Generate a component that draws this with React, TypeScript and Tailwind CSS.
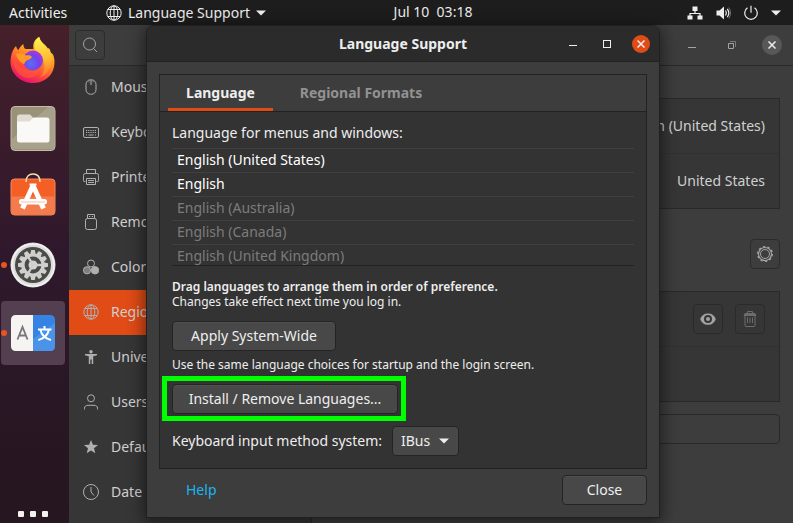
import React from "react";

type IconProps = { children: React.ReactNode; className?: string };

function Icon({ children, className = "h-4 w-4" }: IconProps) {
  return (
    <svg viewBox="0 0 16 16" fill="none" stroke="currentColor" strokeWidth="1" className={className} aria-hidden="true">
      {children}
    </svg>
  );
}

const globe = (
  <>
    <circle cx="8" cy="8" r="7.200" />
    <ellipse cx="8" cy="8" rx="3.800" ry="7.200" />
    <path d="M1.700 4.500h12.600M1.700 11.500h12.600M8 1v14" />
  </>
);

const panels = [
  {
    name: "Mouse & Touchpad",
    icon: (
      <>
        <rect x="3" y="0.8" width="10" height="14.4" rx="4.5" />
        <path d="M8 1v5" />
        <path d="M6 1.5v2M10 1.5v2" opacity=".5" />
      </>
    ),
  },
  {
    name: "Keyboard Shortcuts",
    icon: (
      <>
        <rect x="0.5" y="3.500" width="15" height="10" rx="1.5" />
        <path d="M3 6.500h10M3 8.500h10" strokeDasharray="1.2 1" />
        <path d="M3 11h1M5.5 11h5M12 11h1" />
      </>
    ),
  },
  {
    name: "Printers",
    icon: (
      <>
        <path d="M3.500 4.500v-4h9v4M2.500 12.500H1.200a.8.8 0 0 1-.8-.8V6.500a2 2 0 0 1 2-2h11.200a2 2 0 0 1 2 2v5.200a.8.8 0 0 1-.8.8h-1.300" />
        <path d="M3.500 15.500v-6h9v6zM5 11.500h6M5 13.500h6" />
      </>
    ),
  },
  {
    name: "Removable Media",
    icon: (
      <>
        <path d="M4.500 4.500v-4h7v4M6 2.500h1.200M8.800 2.500H10" />
        <rect x="2.500" y="4.500" width="11" height="11" rx="2" />
      </>
    ),
  },
  {
    name: "Color",
    icon: (
      <>
        <circle cx="8" cy="4.500" r="3.500" />
        <circle cx="4" cy="11.300" r="3.600" fill="currentColor" fillOpacity=".6" />
        <circle cx="12" cy="11.300" r="3.700" fill="currentColor" />
      </>
    ),
  },
  { name: "Region & Language", icon: globe },
  {
    name: "Universal Access",
    icon: (
      <g fill="currentColor" stroke="none">
        <circle cx="8" cy="2.800" r="1.800" />
        <path d="M2 5h12v1.300l-3.800.9V15H8.700v-4.500H7.300V15H5.800V7.200L2 6.300z" />
      </g>
    ),
  },
  {
    name: "Users",
    icon: (
      <>
        <circle cx="8" cy="4.300" r="3.500" />
        <path d="M1.500 15.500v-1.200c0-2 1.500-3 3.500-3h6c2 0 3.500 1 3.500 3v1.200" />
      </>
    ),
  },
  {
    name: "Default Applications",
    icon: <path fill="currentColor" stroke="none" d="m8 1 1.900 4.800 5.100.3-4 3.200 1.300 5L8 11.500l-4.300 2.800 1.300-5-4-3.200 5.100-.3z" />,
  },
  {
    name: "Date & Time",
    icon: (
      <>
        <circle cx="8" cy="8" r="7.500" />
        <path d="M8 3v5l3 3.500" />
      </>
    ),
  },
];

const languages = [
  { name: "English (United States)", active: true },
  { name: "English", active: true },
  { name: "English (Australia)", active: false },
  { name: "English (Canada)", active: false },
  { name: "English (United Kingdom)", active: false },
];

function FirefoxIcon() {
  return (
    <svg viewBox="0 0 48 48" className="h-12 w-12" aria-hidden="true">
      <defs>
        <linearGradient id="fxBody" x1=".8" y1="0" x2=".3" y2="1">
          <stop offset="0" stopColor="#fff44f" />
          <stop offset=".4" stopColor="#ff9a22" />
          <stop offset=".7" stopColor="#ff4a3c" />
          <stop offset="1" stopColor="#e50a75" />
        </linearGradient>
        <linearGradient id="fxFlame" x1=".5" y1="0" x2=".6" y2="1">
          <stop offset="0" stopColor="#fff44f" />
          <stop offset=".6" stopColor="#ffb52e" />
          <stop offset="1" stopColor="#ff6a34" />
        </linearGradient>
        <radialGradient id="fxGlobe" cx=".4" cy=".65" r=".7">
          <stop offset="0" stopColor="#5b6df8" />
          <stop offset=".6" stopColor="#7542e5" />
          <stop offset="1" stopColor="#b833e1" />
        </radialGradient>
      </defs>
      <path fill="url(#fxBody)" d="M7 9c.5 2 1.300 3 2.500 4 1-2.500 2.500-4.500 5-6-.2 2.500.6 4 2 5h8c-1-6 1.500-10 5.500-12 .6 4 3.500 6 6 8.500 1.500 1.500 2 3 2.500 4.500l1-2c1 0 2 3 2.500 5 2.500 0 4.500 7 3 14C43 40 34 46 24 46 11 46 1.500 36 1.500 25 1.500 18 4 12 7 9Z" />
      <path fill="url(#fxFlame)" d="M26 12c-1-6 1.500-10 4.500-12 .6 4 3.500 6 6 8.500 5 5.500 7.500 12 5.500 20-1.500 6-6 10-11 12 4-5 6-12 3-18-2-4-6-6-8-10.500Z" />
      <circle cx="24" cy="23.500" r="10" fill="url(#fxGlobe)" />
      <path fill="#ff9a22" d="M7 17c3-1.500 7-1 10 1.500 3-.5 5 0 6 1.500-1.500 2.500-4 2.500-6 4-1 1-1 2-2 3-3-1-7-5-8-10Z" />
      <path fill="#ff5738" d="M4 21c2 5 7 10 12 11 5 3 12 2 16-3-1 8-6 12-13 12C10 41 4 31 4 21Z" opacity=".65" />
    </svg>
  );
}

function FilesIcon() {
  return (
    <svg viewBox="0 0 48 48" className="h-12 w-12" aria-hidden="true">
      <rect x="2" y="1.500" width="44" height="44" rx="4" fill="#999279" stroke="#c1bda9" />
      <path d="M3 34 39 2h4a2 2 0 0 1 2 2v38a2 2 0 0 1-2 2H5a2 2 0 0 1-2-2z" fill="#b2ad9c" opacity=".55" />
      <path d="M8 12a2.500 2.500 0 0 1 2.500-2.500H21l3 3v7H8z" fill="#e1dccf" />
      <path d="M8 16.500h12.500l4-4H38a2.500 2.500 0 0 1 2.500 2.500v20a2.500 2.500 0 0 1-2.500 2.500H10.500A2.500 2.500 0 0 1 8 35z" fill="#faf9f7" />
    </svg>
  );
}

function SoftwareIcon() {
  return (
    <svg viewBox="0 0 48 48" className="h-12 w-12" aria-hidden="true">
      <rect x="2" y="6" width="44" height="36" rx="3.500" fill="#f45f26" stroke="#f38b62" />
      <path d="M2.500 23.500h43V39a2.500 2.500 0 0 1-2.500 2.500H5A2.500 2.500 0 0 1 2.500 39z" fill="#f47c4c" />
      <path d="M17 9C17 3.500 20 1 24 1S31 3.500 31 9" fill="none" stroke="#f8dfae" strokeWidth="1.600" />
      <path d="M24 12.500 13.500 35.500M24 12.500l10.500 23" stroke="#fff" strokeWidth="5" fill="none" />
      <path d="M20.500 11.500h7" stroke="#fff" strokeWidth="2" />
      <rect x="10" y="26" width="28" height="5.500" rx="2.700" fill="#fff" />
      <path d="M12 29h24" stroke="#f5c3ae" />
    </svg>
  );
}

const teeth = [0, 30, 60, 90, 120, 150, 180, 210, 240, 270, 300, 330];

function SettingsIcon() {
  return (
    <svg viewBox="0 0 48 48" className="h-12 w-12" aria-hidden="true">
      <circle cx="24" cy="24" r="22.500" fill="#dcdcda" />
      <circle cx="24" cy="24" r="21" fill="none" stroke="#f2f2f0" strokeWidth="1.500" />
      <circle cx="24" cy="24" r="18" fill="#4a4a48" />
      <g fill="#cfcfcc">
        {teeth.map((a) => (
          <path key={a} transform={`rotate(${a} 24 24)`} d="M22.200 9h3.600l1 4.500h-5.600z" />
        ))}
      </g>
      <circle cx="24" cy="24" r="10" fill="none" stroke="#cfcfcc" strokeWidth="3.200" />
      <circle cx="24" cy="24" r="4.500" fill="#d4d4d2" />
      <path d="M24 24h9M24 24l-5-8.500M24 24l-5 8.500" stroke="#cfcfcc" strokeWidth="2.400" />
    </svg>
  );
}

function LanguageIcon() {
  return (
    <svg viewBox="0 0 48 48" className="h-12 w-12" aria-hidden="true">
      <path d="M24 6H6.500A4.500 4.500 0 0 0 2 10.500v27A4.500 4.500 0 0 0 6.500 42H24z" fill="#f5f4f2" />
      <path d="M24 6h17.500a4.500 4.500 0 0 1 4.500 4.500v27a4.500 4.500 0 0 1-4.500 4.500H24z" fill="#3584e4" />
      <path d="M24 30 46 14v23.500a4.500 4.500 0 0 1-4.500 4.500H24z" fill="#4b93e8" />
      <path d="M8.500 30.500 13.500 18l5 12.500M10 26.500h7" fill="none" stroke="#77767b" strokeWidth="1.800" />
      <path d="M29 20.500h13.500M35.500 17v3.500M31.500 21c1 5 5 8.500 10.500 10M39.800 21c-1 5-5 8.500-10.500 10" fill="none" stroke="#fff" strokeWidth="2" />
    </svg>
  );
}

function Caret({ className = "" }: { className?: string }) {
  return (
    <svg viewBox="0 0 10 6" className={`h-[6px] w-[10px] ${className}`} aria-hidden="true">
      <path d="M0 .5h10L5 5.500z" fill="currentColor" />
    </svg>
  );
}

const dockItems = [
  { name: "Firefox", icon: <FirefoxIcon />, running: false, focused: false },
  { name: "Files", icon: <FilesIcon />, running: false, focused: false },
  { name: "Ubuntu Software", icon: <SoftwareIcon />, running: false, focused: false },
  { name: "Settings", icon: <SettingsIcon />, running: true, focused: false },
  { name: "Language Support", icon: <LanguageIcon />, running: true, focused: true },
];

function TopBar() {
  return (
    <header className="grid h-[25px] shrink-0 grid-cols-[1fr_auto_1fr] items-center bg-[#1d1d1d] text-[#eeeeee]">
      <div className="flex items-center">
        <button className="w-[106px] pl-[9px] text-left">Activities</button>
        <button className="flex items-center gap-[6px]">
          <Icon className="h-4 w-4">{globe}</Icon>
          <span>Language Support</span>
          <Caret />
        </button>
      </div>
      <button className="-mt-px whitespace-pre pl-[73px]">Jul 10  03:18</button>
      <button className="mr-3 flex items-center gap-3 justify-self-end" aria-label="System menu">
        <svg viewBox="0 0 16 16" className="h-4 w-4" aria-hidden="true">
          <path d="M5.500 1.500h5v4.500h-5zM.5 10.500h5v4h-5zM10.500 10.500h5v4h-5z" fill="currentColor" />
          <path d="M8 6v2.500M3 11V8.500h10V11" fill="none" stroke="currentColor" strokeWidth="1.200" />
        </svg>
        <svg viewBox="0 0 16 16" className="h-4 w-4" aria-hidden="true">
          <path d="M1.500 5.500h3L9 1.500v13l-4.500-4h-3z" fill="currentColor" />
          <path d="M10.500 5.500q1.600 2.500 0 5M12.300 3.800q3 4.200 0 8.400" fill="none" stroke="currentColor" strokeWidth="1.200" />
          <path d="M13.800 2.500q3.500 5.500 0 11" fill="none" stroke="currentColor" opacity=".4" />
        </svg>
        <svg viewBox="0 0 16 16" className="h-4 w-4" aria-hidden="true">
          <path d="M4.500 2.800a6.300 6.300 0 1 0 7 0M8 .8v7" fill="none" stroke="currentColor" strokeWidth="1.200" />
        </svg>
        <Caret />
      </button>
    </header>
  );
}

function Dock() {
  return (
    <nav aria-label="Dock" className="flex w-[69px] shrink-0 flex-col justify-between bg-linear-to-b from-[#46202a] via-[#2f182c] via-45% to-[#25161f] pt-1 pb-[6px]">
      <div className="flex flex-col gap-1">
        {dockItems.map((d) => (
          <button
            key={d.name}
            aria-label={d.name}
            className={`relative ml-px flex h-16 w-16 items-center justify-center rounded-[4px] ${d.focused ? "bg-[#543f50]" : ""}`}
          >
            {d.running && <span className="absolute left-0 h-[6px] w-[6px] rounded-full bg-[#e95420]" />}
            {d.icon}
          </button>
        ))}
      </div>
      <button aria-label="Show Applications" className="flex gap-[6px] pl-[18px]">
        <span className="h-[6px] w-[6px] rounded-[1px] bg-[#f2f1ee]" />
        <span className="h-[6px] w-[6px] rounded-[1px] bg-[#f2f1ee]" />
        <span className="h-[6px] w-[6px] rounded-[1px] bg-[#f2f1ee]" />
      </button>
    </nav>
  );
}

const flatButton = "flex h-[30px] w-[30px] items-center justify-center rounded-[4px] border border-[#2b2b2b]";

function SettingsWindow() {
  return (
    <section aria-label="Settings" className="flex min-w-0 flex-1 flex-col bg-[#3d3d3d] text-[#d0d0d0]">
      <header className="flex h-[41px] shrink-0 items-center justify-between border-b border-[#292929] px-[6px] pr-[11px]">
        <button aria-label="Search" className={`${flatButton} text-[#a3a3a3]`}>
          <Icon className="h-4 w-4">
            <circle cx="7.500" cy="7" r="6" />
            <path d="m11.500 11.500 3.500 3.500" />
          </Icon>
        </button>
        <div className="flex items-center text-[#a3a3a3]">
          <button aria-label="Minimize" className="flex h-5 w-10 items-center justify-center">
            <span className="mt-1 h-px w-2 bg-current" />
          </button>
          <button aria-label="Restore" className="flex h-5 w-10 items-center justify-center">
            <svg viewBox="0 0 8 8" className="h-2 w-2" fill="none" stroke="currentColor" aria-hidden="true">
              <path d="M.5 2.500h5v5h-5z" />
              <path d="M2 .5h5.500V6" opacity=".6" />
            </svg>
          </button>
          <button aria-label="Close settings" className="ml-[10px] flex h-5 w-5 items-center justify-center rounded-full bg-[#585858] text-[#eeeeee]">
            <svg viewBox="0 0 8 8" className="h-2 w-2" stroke="currentColor" strokeWidth="1.500" aria-hidden="true">
              <path d="m.5.500 7 7M7.500.500l-7 7" />
            </svg>
          </button>
        </div>
      </header>
      <div className="flex min-h-0 flex-1">
        <nav aria-label="Settings panels" className="w-[243px] shrink-0 overflow-hidden border-r border-[#292929] bg-[#363636]">
          <ul className="-mt-px">
            {panels.map((p) => (
              <li key={p.name}>
                <a
                  href="#"
                  className={`flex h-[45px] items-center gap-3 pb-px pl-[14px] ${p.name === "Region & Language" ? "bg-[#e04b16]" : ""}`}
                >
                  <span className="text-[#b0b0b0]">
                    <Icon>{p.icon}</Icon>
                  </span>
                  <span>{p.name}</span>
                </a>
              </li>
            ))}
          </ul>
        </nav>
        <main className="flex min-w-0 flex-1 flex-col px-[13px] pt-8 pl-8">
          <div className="border border-[#292929] bg-[#363636]">
            <div className="flex h-[55px] items-center justify-end border-b border-[#313131] px-[14px]">English (United States)</div>
            <div className="flex h-[54px] items-center justify-end px-[14px]">United States</div>
          </div>
          <button aria-label="Input source options" className={`${flatButton} mt-[30px] self-end text-[#a3a3a3]`}>
            <Icon>
              <circle cx="8" cy="8" r="4.500" />
              <circle cx="8" cy="8" r="6.500" strokeWidth="1.200" />
              <circle cx="8" cy="8" r="7.300" strokeWidth="1.400" strokeDasharray="2.300 2.286" />
            </Icon>
          </button>
          <div className="mt-[22px] border border-[#292929] bg-[#363636]">
            <div className="flex h-[55px] items-center justify-end gap-3 border-b border-[#313131] px-[14px]">
              <button aria-label="Show keyboard layout" className={`${flatButton} text-[#a3a3a3]`}>
                <svg viewBox="0 0 16 16" className="h-4 w-4" aria-hidden="true">
                  <path fill="currentColor" fillRule="evenodd" d="M8 2.500c4 0 6.500 2 7.800 5.500C14.500 11.500 12 13.800 8 13.800S1.500 11.500.2 8C1.500 4.500 4 2.500 8 2.500ZM8 4a4 4 0 1 0 0 8 4 4 0 0 0 0-8Zm0 2a2 2 0 1 1 0 4 2 2 0 0 1 0-4Z" />
                </svg>
              </button>
              <button aria-label="Remove input source" className={`${flatButton} text-[#6c6c6c]`}>
                <Icon>
                  <path d="M5.500 2.500v-2h5v2" />
                  <path d="M2 4.500h12L13 2.500H3z" fill="currentColor" />
                  <path d="M3 5v9.500a1 1 0 0 0 1 1h8a1 1 0 0 0 1-1V5M5.500 6.500V12M8 6.500V12M10.500 6.500V12" />
                </Icon>
              </button>
            </div>
            <div className="h-[54px]" />
          </div>
          <button aria-label="Manage Installed Languages" className="mt-3 h-[30px] rounded-[4px] border border-[#292929]" />
        </main>
      </div>
    </section>
  );
}

const pushButton =
  "h-[30px] whitespace-nowrap rounded-[4px] border border-[#242424] bg-[#484848] text-[#eeeeee] shadow-[inset_0_1px_0_#505050]";

function LanguageDialog() {
  return (
    <section
      role="dialog"
      aria-label="Language Support"
      className="absolute top-[25px] left-[146px] w-[514px] rounded-t-[8px] border border-[#202020] bg-[#3d3d3d] text-[#eeeeee] shadow-[0_3px_16px_2px_rgba(0,0,0,0.5)]"
    >
      <header className="grid h-[36px] grid-cols-[1fr_auto_1fr] items-center rounded-t-[7px] border-b border-[#222222] bg-[#2b2b2b]">
        <span />
        <h1 className="font-bold">Language Support</h1>
        <div className="flex items-center justify-end pr-[9px]">
          <button aria-label="Minimize dialog" className="flex h-5 w-[34px] items-center justify-center">
            <span className="mt-1 h-px w-2 bg-current" />
          </button>
          <button aria-label="Maximize dialog" className="flex h-5 w-[34px] items-center justify-center">
            <span className="h-2 w-2 border border-current" />
          </button>
          <button aria-label="Close dialog" className="ml-2 flex h-[18px] w-[18px] items-center justify-center rounded-full bg-[#e04b16]">
            <svg viewBox="0 0 8 8" className="h-2 w-2" stroke="currentColor" strokeWidth="1.500" aria-hidden="true">
              <path d="m.5.500 7 7M7.500.500l-7 7" />
            </svg>
          </button>
        </div>
      </header>
      <div className="px-3 py-3">
        <div className="border border-[#222222] bg-[#333333]">
          <div role="tablist" className="flex h-[37px] border-b border-[#222222] bg-[#3d3d3d] pl-2 font-bold">
            <button role="tab" aria-selected="true" className="w-[105px] border-b-[3px] border-[#e04b16] pt-[3px]">
              Language
            </button>
            <button role="tab" aria-selected="false" className="w-44 border-b-[3px] border-transparent pt-[3px] text-[#929292]">
              Regional Formats
            </button>
          </div>
          <div role="tabpanel" className="flex flex-col items-start px-3 pt-[11px] pb-3">
            <h2>Language for menus and windows:</h2>
            <ul className="mt-[5px] h-[118px] w-full overflow-hidden border-b border-[#222222]">
              {languages.map((l) => (
                <li key={l.name} className={`h-6 border-t border-[#404040] px-[5px] pt-px ${l.active ? "text-white" : "text-[#7c7c7c]"}`}>
                  {l.name}
                </li>
              ))}
            </ul>
            <p className="mt-[13px] text-[12px] leading-[15px]">
              <b className="font-semibold">Drag languages to arrange them in order of preference.</b>
              <br />
              Changes take effect next time you log in.
            </p>
            <button className={`${pushButton} mt-3 w-[164px]`}>Apply System-Wide</button>
            <p className="mt-[6px] text-[12px] leading-[15px]">Use the same language choices for startup and the login screen.</p>
            <div className="relative mt-3 flex">
              <button className={`${pushButton} w-[226px]`}>Install / Remove Languages...</button>
              <span className="pointer-events-none absolute -top-2 -right-2 -bottom-[7px] -left-[10px] border-[5px] border-[#00ff00]" />
            </div>
            <div className="mt-3 flex items-center gap-[7px]">
              <label htmlFor="input-method" className="w-[213px] whitespace-nowrap">
                Keyboard input method system:
              </label>
              <div className="relative flex items-center">
                <select id="input-method" className="h-[30px] w-[67px] appearance-none rounded-[4px] border border-[#242424] bg-[#484848] px-2">
                  <option>IBus</option>
                </select>
                <Caret className="pointer-events-none absolute right-[10px]" />
              </div>
            </div>
          </div>
        </div>
        <footer className="mt-[6px] flex items-center justify-between pl-[27px]">
          <a href="#" className="text-[#19b6ee]">
            Help
          </a>
          <button className={`${pushButton} w-[85px]`}>Close</button>
        </footer>
      </div>
    </section>
  );
}

export default function App() {
  return (
    <div className="relative flex h-screen flex-col overflow-hidden font-['Noto_Sans',sans-serif] text-[14px] leading-5">
      <TopBar />
      <div className="flex min-h-0 flex-1">
        <Dock />
        <SettingsWindow />
      </div>
      <LanguageDialog />
    </div>
  );
}
